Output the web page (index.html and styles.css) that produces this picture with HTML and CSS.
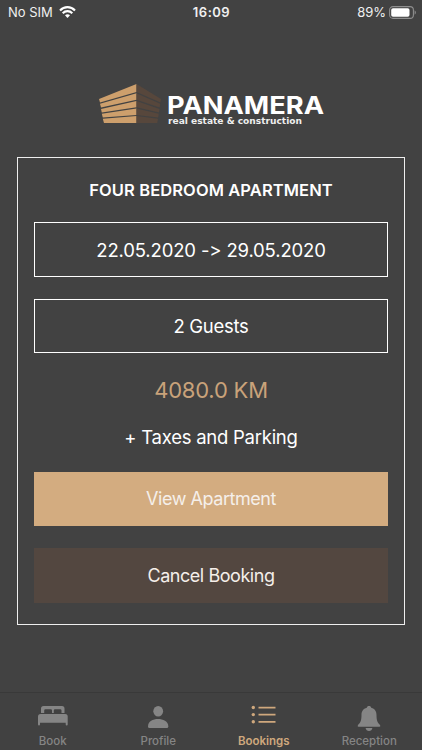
FILE: index.html
```html
<!DOCTYPE html>
<html lang="en">
<head>
    <meta charset="UTF-8">
    <meta name="viewport" content="width=device-width, initial-scale=1.0">
    <title>Bookings</title>
    <link rel="stylesheet" href="styles.css">
</head>
<body>

    <!-- Status bar -->
    <header class="status-bar">
        <div class="status-left">
            <span>No SIM</span>
            <svg class="wifi" width="17" height="12" viewBox="0 0 17 12" fill="none" stroke="#fff" stroke-width="2.1">
                <path d="M1 4.4C5.2 0 11.8 0 16 4.4"/>
                <path d="M3.7 7.2C6.4 4.4 10.6 4.4 13.3 7.2"/>
                <path d="M8.5 12L6 9.3C7.4 7.9 9.6 7.9 11 9.3Z" fill="#fff" stroke="none"/>
            </svg>
        </div>
        <div class="status-time">16:09</div>
        <div class="status-right">
            <span>89%</span>
            <svg class="battery" width="28" height="13" viewBox="0 0 28 13">
                <rect x="0.6" y="0.6" width="23.8" height="11.8" rx="3.4" fill="none" stroke="#8e8e8e" stroke-width="1.1"/>
                <rect x="2.2" y="2.2" width="18.3" height="8.6" rx="1.8" fill="#fff"/>
                <path d="M25.6 4.3C27.3 5 27.3 8 25.6 8.7Z" fill="#8e8e8e"/>
            </svg>
        </div>
    </header>

    <!-- Logo -->
    <div class="logo">
        <svg width="226" height="44" viewBox="0 0 226 44">
            <g fill="#cd9f6c">
                <path d="M0 15L37.5 0V8L1 18.5Z"/>
                <path d="M1 19.7L37.5 9.3V15.8L2 23.6Z"/>
                <path d="M2 24.9L37.5 17V23.3L2.8 28.6Z"/>
                <path d="M2.8 29.8L37.5 24.6V31L3.8 33.6Z"/>
                <path d="M3.8 34.7L37.5 32.1V39H5Z"/>
            </g>
            <g fill="#57473c">
                <path d="M37.5 0L62 15L61.4 18.5L37.5 8Z"/>
                <path d="M37.5 9.3L61.2 19.7L60.7 23.6L37.5 15.8Z"/>
                <path d="M37.5 17L60.5 24.9L60 28.6L37.5 23.3Z"/>
                <path d="M37.5 24.6L59.8 29.8L59.2 33.6L37.5 31Z"/>
                <path d="M37.5 32.1L59 34.7L58.3 39H37.5Z"/>
            </g>
            <text class="logo-name" x="68" y="30" textLength="157" lengthAdjust="spacingAndGlyphs">PANAMERA</text>
            <text class="logo-tagline" x="69" y="39.5" textLength="134" lengthAdjust="spacingAndGlyphs">real estate &amp; construction</text>
        </svg>
    </div>

    <!-- Booking card -->
    <main class="card">
        <h1>FOUR BEDROOM APARTMENT</h1>
        <div class="field dates">22.05.2020 -&gt; 29.05.2020</div>
        <div class="field guests">2 Guests</div>
        <div class="price">4080.0 KM</div>
        <div class="extras">+ Taxes and Parking</div>
        <button class="btn btn-view">View Apartment</button>
        <button class="btn btn-cancel">Cancel Booking</button>
    </main>

    <!-- Tab bar -->
    <nav class="tab-bar">
        <a class="tab">
            <svg width="30" height="28" viewBox="0 0 30 28" fill="currentColor">
                <path d="M3 11V6.5Q3 4 5.500 4H24Q26.500 4 26.500 6.500V11H23.500V8.500Q23.500 7.200 22.200 7.200H17Q15.800 7.200 15.800 8.500V11H14V8.500Q14 7.200 12.800 7.200H7.500Q6.200 7.200 6.200 8.500V11Z"/>
                <path d="M0 22.500V14.500Q0 12 2.500 12H27.200Q29.700 12 29.700 14.500V22.500Q29.700 23.500 28.700 23.500Q27.700 23.500 27.700 22.500V20.700H2V22.500Q2 23.500 1 23.500Q0 23.500 0 22.500Z"/>
            </svg>
            <span>Book</span>
        </a>
        <a class="tab">
            <svg width="22" height="28" viewBox="0 0 22 28" fill="currentColor">
                <ellipse cx="11.200" cy="9.200" rx="4.900" ry="5.300"/>
                <path d="M1 24.500C1 19 6 17 11 17S21.300 19 21.300 24.500Q21.300 26 19.800 26H2.500Q1 26 1 24.500Z"/>
            </svg>
            <span>Profile</span>
        </a>
        <a class="tab active">
            <svg width="26" height="28" viewBox="0 0 26 28" fill="currentColor">
                <circle cx="2.300" cy="5.500" r="1.700"/>
                <circle cx="2.300" cy="12.600" r="1.700"/>
                <circle cx="2.300" cy="19.800" r="1.700"/>
                <path d="M7.500 4.700H24.500V6.400H7.500ZM7.500 11.800H24.500V13.500H7.500ZM7.500 19H24.500V20.700H7.500Z"/>
            </svg>
            <span>Bookings</span>
        </a>
        <a class="tab">
            <svg width="24" height="28" viewBox="0 0 24 28" fill="currentColor">
                <path d="M12 4C13.300 4 14 4.700 14.200 5.700C18 6.800 19.500 9.500 19.500 13C19.500 18.500 20.500 20.500 23 23Q24 24.800 22.500 24.800H1.500Q0 24.800 1 23C3.500 20.500 4.500 18.500 4.500 13C4.500 9.500 6 6.800 9.800 5.700C10 4.700 10.700 4 12 4Z"/>
                <path d="M8.600 26H15.400C15 30 9 30 8.600 26Z"/>
            </svg>
            <span>Reception</span>
        </a>
    </nav>

</body>
</html>
```
FILE: styles.css
```css
* {
    box-sizing: border-box;
}
body {
    font-family: 'Inter', 'Roboto', sans-serif;
    font-variant-ligatures: none;
    font-feature-settings: 'calt' 0;
    margin: 0;
    height: 750px;
    display: flex;
    flex-direction: column;
    background-color: #424242;
    color: #fff;
    overflow: hidden;
}
/* Status bar */
.status-bar {
    display: grid;
    grid-template-columns: 1fr auto 1fr;
    align-items: center;
    height: 24px;
    padding: 0 5px 0 8px;
    font-size: 13px;
    color: #f0f0f0;
}
.status-left, .status-right {
    display: flex;
    align-items: center;
}
.status-left {
    gap: 6px;
}
.status-right {
    justify-content: flex-end;
    gap: 3px;
}
.status-time {
    padding-right: 2px;
    font-weight: 600;
    letter-spacing: 0.5px;
}
/* Logo */
.logo {
    height: 133px;
    padding: 60px 0 0 99px;
}
.logo svg {
    display: block;
    overflow: visible;
}
.logo-name {
    font-family: 'Inter', sans-serif;
    font-size: 24px;
    font-weight: 700;
    fill: #fff;
}
.logo-tagline {
    font-family: 'DejaVu Sans', sans-serif;
    font-size: 8.5px;
    font-weight: 700;
    fill: #eee;
}
/* Booking card */
.card {
    display: flex;
    flex-direction: column;
    flex: none;
    width: 388px;
    height: 468px;
    margin: 0 17px;
    padding: 0 16px;
    border: 1px solid #eee;
    text-align: center;
    font-size: 18.5px;
}
.card h1 {
    margin: 21px 0 21px;
    font-size: 16.5px;
    line-height: 22px;
    font-weight: 600;
    letter-spacing: 0.1px;
}
.field, .btn {
    flex: none;
    height: 54px;
    margin-bottom: 23px;
    line-height: 54px;
}
.field {
    border: 1px solid #fff;
}
.dates {
    height: 55px;
    margin-bottom: 22px;
    letter-spacing: -0.15px;
}
.guests {
    line-height: 52px;
    letter-spacing: -0.3px;
}
.price {
    line-height: 28px;
    font-size: 22px;
    letter-spacing: -0.2px;
    color: #c9a27a;
}
.extras {
    margin: 20px 0 22px;
    line-height: 26px;
    letter-spacing: -0.25px;
}
.btn {
    padding: 0;
    border: none;
    font-family: inherit;
    font-size: 18px;
    letter-spacing: -0.45px;
    line-height: 54px;
    color: #f5efea;
}
.btn-view {
    margin-bottom: 22px;
    background-color: #d3ac80;
}
.btn-cancel {
    height: 55px;
    background-color: #534740;
}
/* Tab bar */
.tab-bar {
    display: grid;
    grid-template-columns: repeat(4, 1fr);
    height: 58px;
    margin-top: auto;
    border-top: 1px solid #393939;
    background-color: #414141;
}
.tab {
    display: flex;
    flex-direction: column;
    align-items: center;
    padding-top: 9px;
    font-size: 11.5px;
    font-weight: 500;
    line-height: 16px;
    color: #858585;
}
.tab svg {
    overflow: visible;
    margin-bottom: 3px;
}
.tab.active {
    color: #cfa87d;
    font-weight: 600;
}
```
